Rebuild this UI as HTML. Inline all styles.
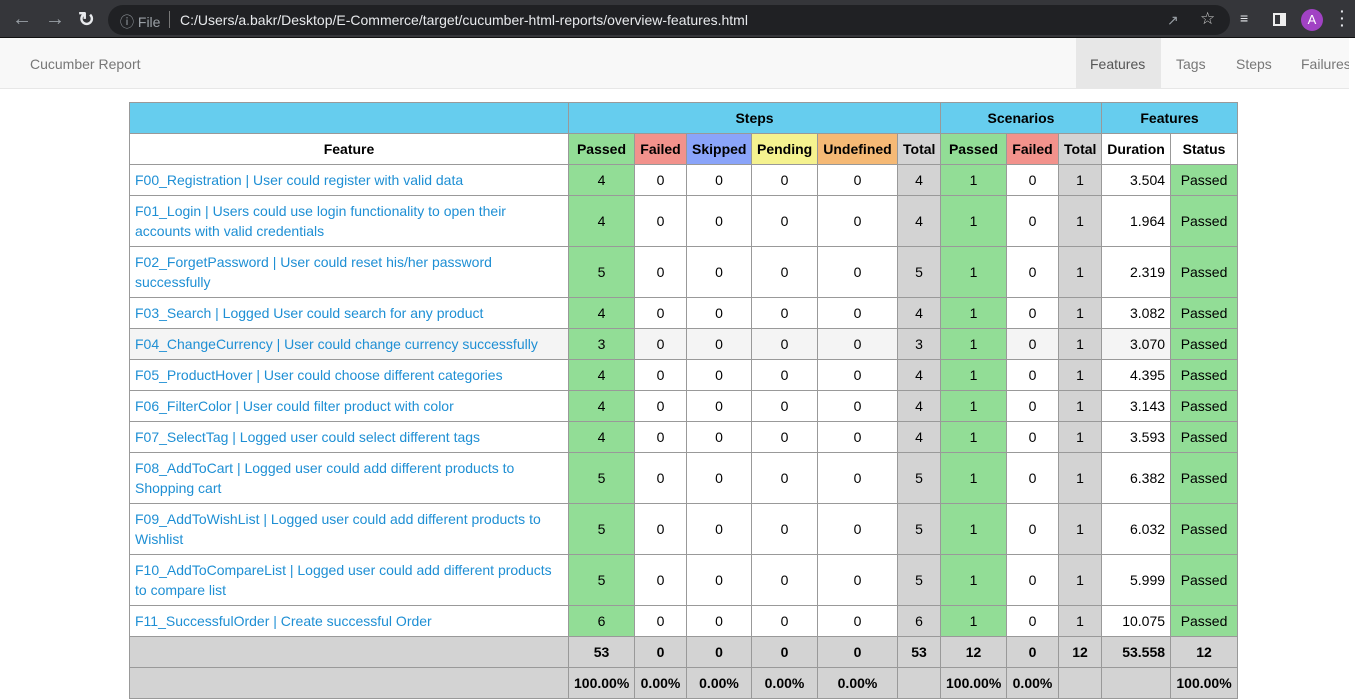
<!DOCTYPE html>
<html><head><meta charset="utf-8"><style>
*{box-sizing:border-box;margin:0;padding:0}
body{width:1355px;height:696px;overflow:hidden;background:#fff;font-family:"Liberation Sans",Arial,sans-serif;font-size:14px;position:relative}
.chrome{position:absolute;left:0;top:0;width:1355px;height:38px;background:#35363a;border-bottom:1px solid #111}
.omni{position:absolute;left:108px;top:5px;width:1122px;height:30px;background:#202124;border-radius:15px}
.ct{position:absolute;color:#e8eaed;font-size:14px;top:12px}
.nav{position:absolute;left:0;top:38px;width:1349px;height:51px;background:#f8f8f8;border-bottom:1px solid #e7e7e7;overflow:hidden}
.nav span{position:absolute;top:18px;color:#777;font-size:14px;white-space:nowrap}
.act{position:absolute;left:1076px;top:0;width:85px;height:51px;background:#e7e7e7}
table{position:absolute;left:129px;top:102px;border-collapse:collapse;table-layout:fixed;width:1108px}
td,th{border:1px solid #999;text-align:center;height:31px;padding:0 5px;color:#000;font-size:14px}
th{font-weight:bold}
.b{background:#66cdee}
.p{background:#92dd96}.f{background:#f2928c}.s{background:#8aa4f9}.pe{background:#f5f28f}.u{background:#f5b975}.t{background:#d3d3d3}
td.l{text-align:left;color:#1e8fd4;line-height:20px}
tr.d td{height:51px}
tr.h td:not(.p):not(.t){background:#f4f4f4}
td.r{text-align:right}
tfoot td{background:#d3d3d3;font-weight:bold}
</style></head><body>
<div class="chrome">
<span class="ct" style="left:12px;top:8px;font-size:20px;color:#9aa0a6">&#8592;</span>
<span class="ct" style="left:45px;top:8px;font-size:20px;color:#9aa0a6">&#8594;</span>
<span class="ct" style="left:78px;top:7px;font-size:20px;font-weight:bold">&#8635;</span>
<div class="omni"></div>
<span class="ct" style="left:120px;color:#9aa0a6">&#9432; File</span>
<span style="position:absolute;left:169px;top:11px;width:1px;height:17px;background:#777"></span>
<span class="ct" style="left:180px">C:/Users/a.bakr/Desktop/E-Commerce/target/cucumber-html-reports/overview-features.html</span>
<span class="ct" style="left:1167px;color:#9aa0a6">&#8599;</span>
<span class="ct" style="left:1200px;top:9px;font-size:17px;color:#ccc">&#9734;</span>
<span class="ct" style="left:1240px;top:10px;font-weight:bold">&#8801;</span>
<span style="position:absolute;left:1273px;top:13px;width:13px;height:13px;border:2px solid #eee;border-right-width:6px"></span>
<span style="position:absolute;left:1301px;top:9px;width:22px;height:22px;border-radius:11px;background:#a142c4;color:#fff;font-size:13px;text-align:center;line-height:22px">A</span>
<span class="ct" style="left:1340px;top:8px;font-weight:bold;line-height:7px">·<br>·<br>·</span>
</div>
<div class="nav"><span style="left:30px">Cucumber Report</span><div class="act"></div>
<span style="left:1090px;color:#555">Features</span><span style="left:1176px">Tags</span><span style="left:1236px">Steps</span><span style="left:1301px">Failures</span></div>
<table>
<colgroup><col style="width:439px"><col style="width:66px"><col style="width:52px"><col style="width:65px"><col style="width:66px"><col style="width:80px"><col style="width:43px"><col style="width:66px"><col style="width:52px"><col style="width:43px"><col style="width:69px"><col style="width:67px"></colgroup>
<tr><th class="b"></th><th class="b" colspan="6">Steps</th><th class="b" colspan="3">Scenarios</th><th class="b" colspan="2">Features</th></tr>
<tr><th>Feature</th><th class="p">Passed</th><th class="f">Failed</th><th class="s">Skipped</th><th class="pe">Pending</th><th class="u">Undefined</th><th class="t">Total</th><th class="p">Passed</th><th class="f">Failed</th><th class="t">Total</th><th>Duration</th><th>Status</th></tr>
<tr><td class="l">F00_Registration | User could register with valid data</td><td class="p">4</td><td>0</td><td>0</td><td>0</td><td>0</td><td class="t">4</td><td class="p">1</td><td>0</td><td class="t">1</td><td class="r">3.504</td><td class="p">Passed</td></tr>
<tr class="d"><td class="l">F01_Login | Users could use login functionality to open their accounts with valid credentials</td><td class="p">4</td><td>0</td><td>0</td><td>0</td><td>0</td><td class="t">4</td><td class="p">1</td><td>0</td><td class="t">1</td><td class="r">1.964</td><td class="p">Passed</td></tr>
<tr class="d"><td class="l">F02_ForgetPassword | User could reset his/her password successfully</td><td class="p">5</td><td>0</td><td>0</td><td>0</td><td>0</td><td class="t">5</td><td class="p">1</td><td>0</td><td class="t">1</td><td class="r">2.319</td><td class="p">Passed</td></tr>
<tr><td class="l">F03_Search | Logged User could search for any product</td><td class="p">4</td><td>0</td><td>0</td><td>0</td><td>0</td><td class="t">4</td><td class="p">1</td><td>0</td><td class="t">1</td><td class="r">3.082</td><td class="p">Passed</td></tr>
<tr class="h"><td class="l">F04_ChangeCurrency | User could change currency successfully</td><td class="p">3</td><td>0</td><td>0</td><td>0</td><td>0</td><td class="t">3</td><td class="p">1</td><td>0</td><td class="t">1</td><td class="r">3.070</td><td class="p">Passed</td></tr>
<tr><td class="l">F05_ProductHover | User could choose different categories</td><td class="p">4</td><td>0</td><td>0</td><td>0</td><td>0</td><td class="t">4</td><td class="p">1</td><td>0</td><td class="t">1</td><td class="r">4.395</td><td class="p">Passed</td></tr>
<tr><td class="l">F06_FilterColor | User could filter product with color</td><td class="p">4</td><td>0</td><td>0</td><td>0</td><td>0</td><td class="t">4</td><td class="p">1</td><td>0</td><td class="t">1</td><td class="r">3.143</td><td class="p">Passed</td></tr>
<tr><td class="l">F07_SelectTag | Logged user could select different tags</td><td class="p">4</td><td>0</td><td>0</td><td>0</td><td>0</td><td class="t">4</td><td class="p">1</td><td>0</td><td class="t">1</td><td class="r">3.593</td><td class="p">Passed</td></tr>
<tr class="d"><td class="l">F08_AddToCart | Logged user could add different products to Shopping cart</td><td class="p">5</td><td>0</td><td>0</td><td>0</td><td>0</td><td class="t">5</td><td class="p">1</td><td>0</td><td class="t">1</td><td class="r">6.382</td><td class="p">Passed</td></tr>
<tr class="d"><td class="l">F09_AddToWishList | Logged user could add different products to Wishlist</td><td class="p">5</td><td>0</td><td>0</td><td>0</td><td>0</td><td class="t">5</td><td class="p">1</td><td>0</td><td class="t">1</td><td class="r">6.032</td><td class="p">Passed</td></tr>
<tr class="d"><td class="l">F10_AddToCompareList | Logged user could add different products to compare list</td><td class="p">5</td><td>0</td><td>0</td><td>0</td><td>0</td><td class="t">5</td><td class="p">1</td><td>0</td><td class="t">1</td><td class="r">5.999</td><td class="p">Passed</td></tr>
<tr><td class="l">F11_SuccessfulOrder | Create successful Order</td><td class="p">6</td><td>0</td><td>0</td><td>0</td><td>0</td><td class="t">6</td><td class="p">1</td><td>0</td><td class="t">1</td><td class="r">10.075</td><td class="p">Passed</td></tr>
<tfoot>
<tr><td></td><td>53</td><td>0</td><td>0</td><td>0</td><td>0</td><td>53</td><td>12</td><td>0</td><td>12</td><td class="r">53.558</td><td>12</td></tr>
<tr><td></td><td>100.00%</td><td>0.00%</td><td>0.00%</td><td>0.00%</td><td>0.00%</td><td></td><td>100.00%</td><td>0.00%</td><td></td><td></td><td>100.00%</td></tr>
</tfoot>
</table>
</body></html>
